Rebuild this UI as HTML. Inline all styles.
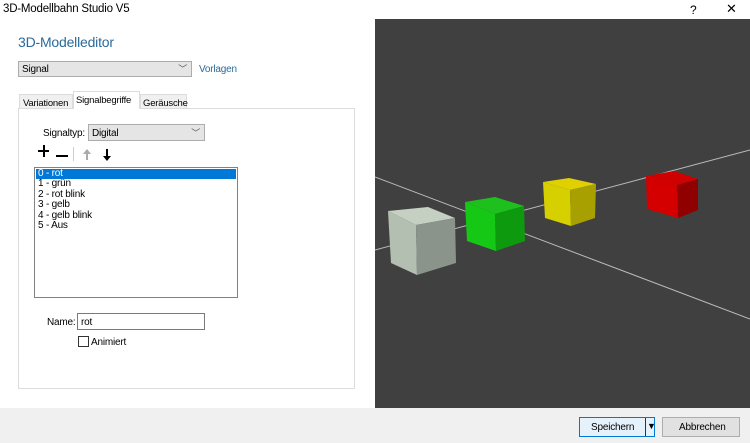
<!DOCTYPE html>
<html><head><style>
*{margin:0;padding:0;box-sizing:border-box}
body{width:750px;height:443px;position:relative;background:#fff;font-family:"Liberation Sans",sans-serif;font-size:10px;color:#000;overflow:hidden;letter-spacing:-0.2px}
.a{position:absolute;white-space:nowrap}
.sel{border:1px solid #acacac;background:#e5e5e5}
</style></head><body>
<div class="a" style="left:3px;top:3px;font-size:11.5px">3D-Modellbahn Studio V5</div>
<div class="a" style="left:690px;top:3px;font-size:12px">?</div>
<div class="a" style="left:726px;top:1px;font-size:13px">✕</div>
<div class="a" style="left:18px;top:34px;font-size:14px;color:#2a6a9a">3D-Modelleditor</div>
<div class="a sel" style="left:18px;top:61px;width:174px;height:16px"><span class="a" style="left:3px;top:2px">Signal</span><span class="a" style="right:4px;top:0px;font-size:9px;color:#555">﹀</span></div>
<div class="a" style="left:199px;top:64px;color:#2a6a9a">Vorlagen</div>
<div class="a" style="left:18px;top:108px;width:337px;height:281px;border:1px solid #dcdcdc;background:#fff"></div>
<div class="a" style="left:19px;top:94px;width:54px;height:15px;border:1px solid #dcdcdc;background:#f0f0f0;padding:3px 3px;font-size:9.5px">Variationen</div>
<div class="a" style="left:73px;top:91px;width:67px;height:18px;border:1px solid #dcdcdc;border-bottom:none;background:#fff;padding:3px 2px;font-size:9.5px">Signalbegriffe</div>
<div class="a" style="left:140px;top:94px;width:47px;height:15px;border:1px solid #dcdcdc;background:#f0f0f0;padding:3px 2px;font-size:9.5px">Geräusche</div>
<div class="a" style="left:43px;top:128px">Signaltyp:</div>
<div class="a sel" style="left:88px;top:124px;width:117px;height:17px"><span class="a" style="left:3px;top:3px">Digital</span><span class="a" style="right:4px;top:1px;font-size:9px;color:#555">﹀</span></div>
<div class="a" style="left:38px;top:150px;width:11px;height:2px;background:#000"></div>
<div class="a" style="left:43px;top:145px;width:2px;height:12px;background:#000"></div>
<div class="a" style="left:56px;top:155px;width:12px;height:2px;background:#000"></div>
<div class="a" style="left:73px;top:147px;width:1px;height:14px;background:#ccc"></div>
<svg class="a" style="left:82px;top:148px" width="34" height="14"><path d="M5 1L1 6H4V12H6V6H9Z" fill="#aaa"/><path d="M24 1V8H21L25 13L29 8H26V1Z" fill="#000"/></svg>
<div class="a" style="left:34px;top:167px;width:204px;height:131px;border:1px solid #828282;background:#fff;line-height:10.5px">
<div style="background:#0078d7;color:#fff;margin:1px 1px 0 1px;padding-left:2px;height:10px">0 - rot</div>
<div style="padding-left:3px">1 - grün</div><div style="padding-left:3px">2 - rot blink</div><div style="padding-left:3px">3 - gelb</div><div style="padding-left:3px">4 - gelb blink</div><div style="padding-left:3px">5 - Aus</div></div>
<div class="a" style="left:47px;top:317px">Name:</div>
<div class="a" style="left:77px;top:313px;width:128px;height:17px;border:1px solid #7a7a7a;padding:3px 3px">rot</div>
<div class="a" style="left:78px;top:336px;width:11px;height:11px;border:1px solid #333"></div>
<div class="a" style="left:91px;top:337px">Animiert</div>
<div class="a" style="left:375px;top:19px;width:375px;height:389px;background:#404040">
<svg width="375" height="389">
<line x1="0" y1="231" x2="375" y2="131" stroke="#bbb" stroke-width="1"/>
<line x1="0" y1="158" x2="375" y2="300" stroke="#bbb" stroke-width="1"/>
<polygon points="13,192 53,188 80,199 41,206" fill="#c5cfc2"/><polygon points="13,192 41,206 42,256 16,244" fill="#b3bfb0"/><polygon points="41,206 80,199 81,244 42,256" fill="#8a948a"/>
<polygon points="90,183 120,178 149,187 120,195" fill="#1ec01e"/><polygon points="90,183 120,195 121,232 92,222" fill="#16c816"/><polygon points="120,195 149,187 150,222 121,232" fill="#0e9a0e"/>
<polygon points="168,163 194,159 221,165 195,171" fill="#e0d000"/><polygon points="168,163 195,171 196,207 170,199" fill="#d6d000"/><polygon points="195,171 221,165 220,199 196,207" fill="#a8a000"/>
<polygon points="271,157 299,152 323,160 302,166" fill="#d00000"/><polygon points="271,157 302,166 303,199 272,190" fill="#d40000"/><polygon points="302,166 323,160 323,191 303,199" fill="#900000"/>
</svg></div>
<div class="a" style="left:0;top:408px;width:750px;height:35px;background:#f0f0f0"></div>
<div class="a" style="left:579px;top:417px;width:76px;height:20px;border:1px solid #0078d7;background:#e5f1fb"><span class="a" style="left:11px;top:4px">Speichern</span><span class="a" style="left:65px;top:0;width:1px;height:18px;background:#333"></span><span class="a" style="left:67px;top:3px;font-size:9px">▼</span></div>
<div class="a" style="left:662px;top:417px;width:78px;height:20px;border:1px solid #adadad;background:#e1e1e1"><span class="a" style="left:16px;top:4px">Abbrechen</span></div>
</body></html>
